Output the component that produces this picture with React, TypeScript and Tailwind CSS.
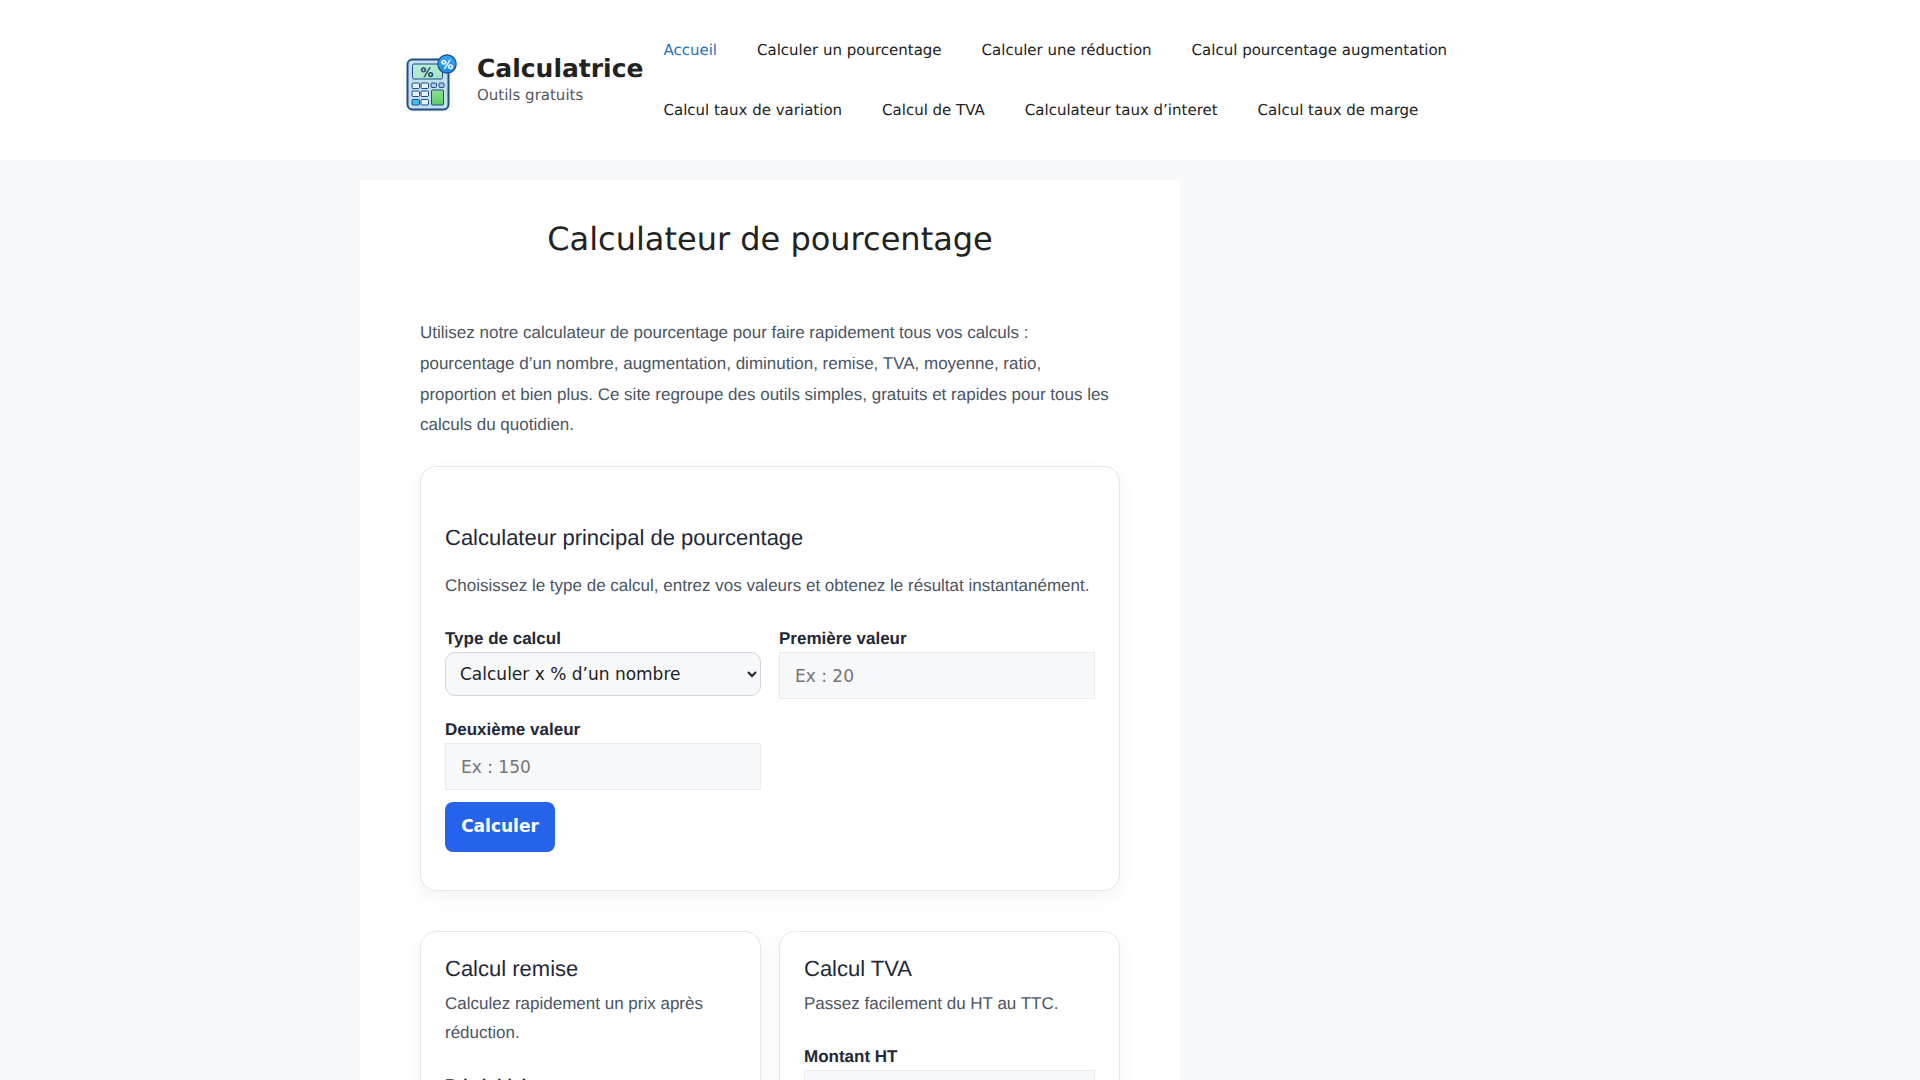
const dejavu = "font-['DejaVu_Sans',sans-serif]";

function Logo() {
  return (
    <svg width="64" height="70" viewBox="0 0 64 70" className="block">
      <defs>
        <linearGradient id="logoGreen" x1="0" y1="0" x2="0" y2="1">
          <stop offset="0" stopColor="#8fe08f" />
          <stop offset="1" stopColor="#5cc96e" />
        </linearGradient>
        <linearGradient id="logoBadge" x1="0" y1="0" x2="0" y2="1">
          <stop offset="0" stopColor="#35a8f5" />
          <stop offset="1" stopColor="#1e88e5" />
        </linearGradient>
        <linearGradient id="logoScreen" x1="0" y1="0" x2="1" y2="1">
          <stop offset="0" stopColor="#b9eedb" />
          <stop offset="1" stopColor="#a5e3c4" />
        </linearGradient>
      </defs>
      <ellipse cx="27" cy="62.5" rx="24" ry="1" fill="#e5e7eb" />
      <rect x="7.5" y="11.5" width="41" height="50" rx="5" fill="#c4def2" stroke="#1d4f86" strokeWidth="2" />
      <rect x="12.5" y="16" width="30" height="15" rx="1.5" fill="url(#logoScreen)" stroke="#1d4f86" strokeWidth="1" />
      <text x="27" y="28.5" textAnchor="middle" fontSize="13" fontWeight="700" fill="#1d3f66" fontFamily="DejaVu Sans">%</text>
      {[[12, 35], [21, 35], [12, 43], [21, 43], [12, 51.5], [21, 51.5]].map(([x, y], i) => (
        <rect key={i} x={x} y={y} width="7.5" height="5.5" rx="1" fill={i === 4 ? "#4cb8f0" : "#e3f0fa"} stroke="#1d4f86" strokeWidth="1" />
      ))}
      <rect x="31" y="35" width="5.5" height="4.5" rx="1" fill="#a9cce8" stroke="#1d4f86" strokeWidth="1" />
      <rect x="39" y="35" width="5" height="4.5" rx="1" fill="#a9cce8" stroke="#1d4f86" strokeWidth="1" />
      <rect x="31.5" y="42" width="12" height="15" rx="1" fill="url(#logoGreen)" stroke="#1d4f86" strokeWidth="1" />
      <circle cx="47" cy="16" r="9.2" fill="url(#logoBadge)" stroke="#1d4f86" strokeWidth="1.2" />
      <text x="47" y="20.5" textAnchor="middle" fontSize="12.5" fontWeight="700" fill="#ffffff" fontFamily="DejaVu Sans">%</text>
    </svg>
  );
}

function Field({ label, placeholder, wrap = "" }: { label: string; placeholder: string; wrap?: string }) {
  return (
    <div className={wrap}>
      <label className="block text-[17px] leading-[18px] font-bold text-[#1f2937]">{label}</label>
      <input
        placeholder={placeholder}
        className={`${dejavu} mt-[4px] block h-[47px] w-full border border-[#e9ebee] bg-[#f7f8f9] px-[15px] text-[17px] text-[#666666] placeholder:text-[#757575] outline-none`}
      />
    </div>
  );
}

export default function App() {
  const row1 = ["Accueil", "Calculer un pourcentage", "Calculer une réduction", "Calcul pourcentage augmentation"];
  const row2 = ["Calcul taux de variation", "Calcul de TVA", "Calculateur taux d’interet", "Calcul taux de marge"];
  return (
    <div className="h-[1080px] overflow-hidden bg-[#f7f8f9] font-['Liberation_Sans',sans-serif] [text-rendering:geometricPrecision]">
      <header className={`${dejavu} flex h-[160px] bg-white pl-[400px]`}>
        <div className="mt-[48px] flex h-[70px] items-start">
          <Logo />
          <div className="ml-[13px] mt-[5px]">
            <div className="text-[25px] leading-[32px] font-bold text-[#222222]">Calculatrice</div>
            <div className="text-[15px] leading-[20px] text-[#575760]">Outils gratuits</div>
          </div>
        </div>
        <nav className="pt-[20px] text-[15px] text-[#222222]">
          {[row1, row2].map((row, r) => (
            <div key={r} className="flex h-[60px] items-center gap-[40px] pl-[20px]">
              {row.map((t, i) => (
                <a key={t} className={r === 0 && i === 0 ? "text-[#1e73be]" : ""}>{t}</a>
              ))}
            </div>
          ))}
        </nav>
      </header>

      <main className="ml-[360px] mt-[20px] w-[820px] bg-white px-[60px] pt-[35px]">
        <h1 className={`${dejavu} text-center text-[32px] leading-[48px] text-[#222222]`}>Calculateur de pourcentage</h1>
        <p className="mt-[55px] text-[17px] leading-[30.8px] text-[#4b5563]">
          Utilisez notre calculateur de pourcentage pour faire rapidement tous vos calculs : pourcentage d’un nombre, augmentation, diminution, remise, TVA, moyenne, ratio, proportion et bien plus. Ce site regroupe des outils simples, gratuits et rapides pour tous les calculs du quotidien.
        </p>

        <section className="mt-[25px] h-[425px] rounded-[16px] border border-[#e5e7eb] bg-white px-[24px] pt-[55px] shadow-[0_6px_20px_rgba(0,0,0,0.05)]">
          <h2 className="text-[22px] leading-[32px] text-[#1f2937]">Calculateur principal de pourcentage</h2>
          <p className="mt-[16px] text-[17px] leading-[32px] text-[#4b5563]">Choisissez le type de calcul, entrez vos valeurs et obtenez le résultat instantanément.</p>
          <div className="mt-[28px] grid grid-cols-2 gap-x-[18px] gap-y-[22px]">
            <div>
              <label className="block text-[17px] leading-[18px] font-bold text-[#1f2937]">Type de calcul</label>
              <select className={`${dejavu} mt-[4px] block h-[44px] w-full rounded-[10px] border border-[#d1d5db] bg-[#f7f8f9] pl-[10px] text-[17px] text-[#222222] outline-none`}>
                <option>Calculer x % d’un nombre</option>
              </select>
            </div>
            <Field label="Première valeur" placeholder="Ex : 20" />
            <Field label="Deuxième valeur" placeholder="Ex : 150" />
          </div>
          <button className={`${dejavu} mt-[12px] block h-[50px] w-[110px] rounded-[8px] bg-[#2563eb] text-[17px] font-bold text-white`}>Calculer</button>
        </section>

        <div className="mt-[40px] grid grid-cols-2 gap-x-[18px]">
          <section className="h-[400px] rounded-[16px] border border-[#e5e7eb] bg-white px-[24px] pt-[21px] shadow-[0_6px_20px_rgba(0,0,0,0.05)]">
            <h3 className="text-[22px] leading-[32px] text-[#1f2937]">Calcul remise</h3>
            <p className="mt-[4px] text-[17px] leading-[29px] text-[#4b5563]">Calculez rapidement un prix après réduction.</p>
            <Field wrap="mt-[30px]" label="Prix initial" placeholder="" />
          </section>
          <section className="h-[400px] rounded-[16px] border border-[#e5e7eb] bg-white px-[24px] pt-[21px] shadow-[0_6px_20px_rgba(0,0,0,0.05)]">
            <h3 className="text-[22px] leading-[32px] text-[#1f2937]">Calcul TVA</h3>
            <p className="mt-[4px] text-[17px] leading-[29px] text-[#4b5563]">Passez facilement du HT au TTC.</p>
            <Field wrap="mt-[30px]" label="Montant HT" placeholder="" />
          </section>
        </div>
      </main>
    </div>
  );
}
